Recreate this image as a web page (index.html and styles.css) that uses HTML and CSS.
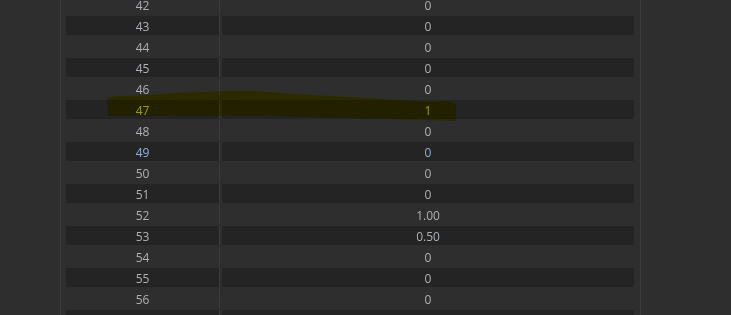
FILE: index.html
```html
<!DOCTYPE html>
<html>
<head>
<meta charset="utf-8">
<link rel="stylesheet" href="styles.css">
</head>
<body>
<div class="layout">
  <div class="side-left"></div>
  <div class="main">
    <div class="rows">
      <div class="row"><div class="c-id">42</div><div class="c-val">0</div></div>
      <div class="row alt"><div class="c-id">43</div><div class="c-val">0</div></div>
      <div class="row"><div class="c-id">44</div><div class="c-val">0</div></div>
      <div class="row alt"><div class="c-id">45</div><div class="c-val">0</div></div>
      <div class="row"><div class="c-id">46</div><div class="c-val">0</div></div>
      <div class="row alt"><div class="c-id">47</div><div class="c-val">1</div></div>
      <div class="row"><div class="c-id">48</div><div class="c-val">0</div></div>
      <div class="row alt sel"><div class="c-id">49</div><div class="c-val">0</div></div>
      <div class="row"><div class="c-id">50</div><div class="c-val">0</div></div>
      <div class="row alt"><div class="c-id">51</div><div class="c-val">0</div></div>
      <div class="row"><div class="c-id">52</div><div class="c-val">1.00</div></div>
      <div class="row alt"><div class="c-id">53</div><div class="c-val">0.50</div></div>
      <div class="row"><div class="c-id">54</div><div class="c-val">0</div></div>
      <div class="row alt"><div class="c-id">55</div><div class="c-val">0</div></div>
      <div class="row"><div class="c-id">56</div><div class="c-val">0</div></div>
      <div class="row alt"><div class="c-id">57</div><div class="c-val">0</div></div>
    </div>
  </div>
  <div class="side-right"></div>
</div>
<svg class="marker" width="731" height="315" viewBox="0 0 731 315">
  <path d="M107,99 C110,97 114,96 120,96 L150,95 L175,93 L200,92 L225,91 L255,91 L280,93 L310,95 L350,97 L380,99 L410,101 L433,102 L442,101 L451,102 L456,105 L456,121 L420,120 L380,119 L340,118 L300,117 L250,116 L200,116.5 L150,116 L108,116 Z"/>
</svg>
</body>
</html>
```

FILE: styles.css
```css
html, body {
  margin: 0;
  padding: 0;
  background: #2e2e2e;
  height: 100%;
  overflow: hidden;
}

body {
  font-family: "Open Sans", "Noto Sans", sans-serif;
  font-size: 12px;
  color: #adb1b5;
  position: relative;
}

.layout {
  display: flex;
  height: 315px;
}

.side-left {
  width: 60px;
  border-right: 1px solid #3b3b3b;
  flex: none;
}

.main {
  width: 568px;
  padding: 0 6px 0 5px;
  flex: none;
}

.side-right {
  flex: 1;
  border-left: 1px solid #3b3b3b;
}

.rows {
  display: flex;
  flex-direction: column;
  gap: 2px;
  margin-top: -5px;
}

.row {
  display: flex;
  height: 19px;
  line-height: 19px;
}

.c-id {
  width: 154px;
  text-align: center;
  border-right: 1px solid #3b3b3b;
  margin-right: 2px;
  padding-top: 1px;
  box-sizing: border-box;
}

.c-val {
  flex: 1;
  text-align: center;
  padding-top: 1px;
  box-sizing: border-box;
}

.row.alt .c-id,
.row.alt .c-val {
  background: #242424;
}

.row.sel {
  color: #8fb2dc;
}

.marker {
  position: absolute;
  left: 0;
  top: 0;
  mix-blend-mode: multiply;
  pointer-events: none;
}

.marker path {
  fill: #e6e400;
}
```
